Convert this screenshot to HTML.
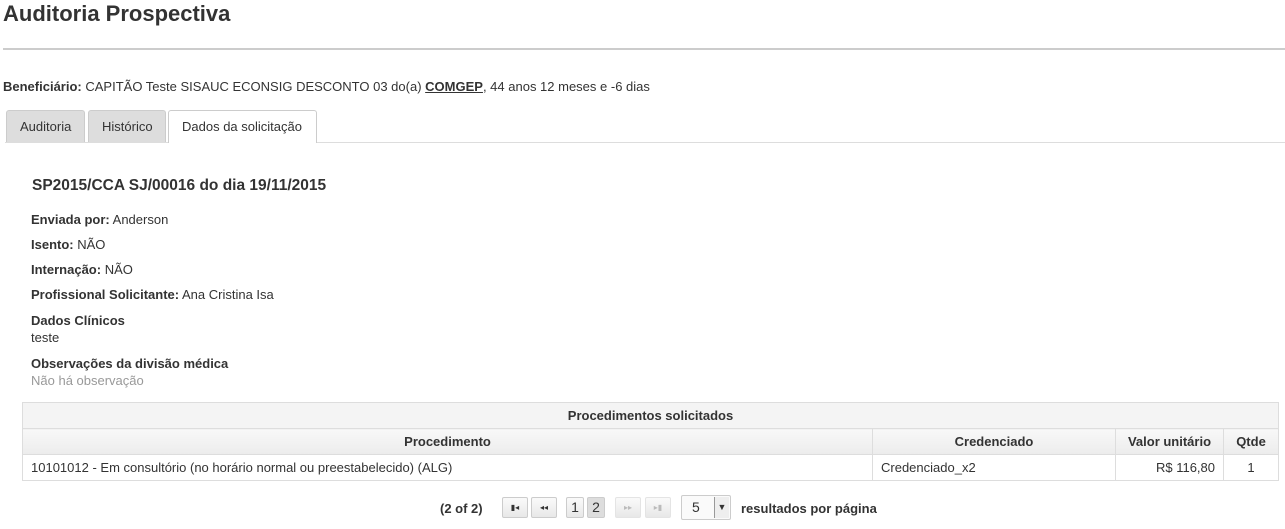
<!DOCTYPE html>
<html><head><meta charset="utf-8"><style>
body{margin:0;font-family:"Liberation Sans",Arial,sans-serif;font-size:13px;color:#333;background:#fff;width:1285px;height:529px;overflow:hidden;position:relative}
.a{position:absolute;white-space:nowrap}
h1{position:absolute;left:3px;top:1px;margin:0;font-size:22px;font-weight:bold;color:#333}
.hr{position:absolute;left:3px;top:48px;width:1282px;height:2px;background:#ccc}
.tab{position:absolute;top:110px;height:32px;line-height:32px;background:#ddd;border:1px solid #ccc;border-bottom:none;border-radius:3px 3px 0 0;padding:0 13px;font-size:13px;color:#333;box-sizing:border-box}
.tabs-line{position:absolute;left:5px;right:0;top:142px;height:1px;background:#ddd}
b{color:#333}
table{position:absolute;left:22px;top:402px;width:1257px;border-collapse:collapse;font-size:13px}
td,th{border:1px solid #ddd;height:25px;padding:0 8px}
th{background:linear-gradient(#f8f8f8,#ececec);font-weight:bold;color:#333}
.btn{position:absolute;top:497px;height:21px;border:1px solid #ccc;border-radius:2px;background:linear-gradient(#fafafa,#e8e8e8);box-sizing:border-box;font-size:14px;text-align:center;line-height:19px;color:#333}
</style></head><body>
<h1>Auditoria Prospectiva</h1>
<div class="hr"></div>
<div class="a" style="left:3px;top:79px"><b>Beneficiário:</b> CAPITÃO Teste SISAUC ECONSIG DESCONTO 03 do(a) <b style="text-decoration:underline">COMGEP</b>, 44 anos 12 meses e -6 dias</div>
<div class="tab" style="left:6px;width:79px">Auditoria</div>
<div class="tab" style="left:88px;width:78px">Histórico</div>
<div class="tabs-line"></div>
<div class="tab" style="left:168px;width:149px;background:#fff;height:33px">Dados da solicitação</div>
<div class="a" style="left:32px;top:177px;font-size:15.5px;font-weight:bold;color:#333">SP2015/CCA SJ/00016 do dia 19/11/2015</div>
<div class="a" style="left:31px;top:212px"><b>Enviada por:</b> Anderson</div>
<div class="a" style="left:31px;top:237px"><b>Isento:</b> NÃO</div>
<div class="a" style="left:31px;top:262px"><b>Internação:</b> NÃO</div>
<div class="a" style="left:31px;top:287px"><b>Profissional Solicitante:</b> Ana Cristina Isa</div>
<div class="a" style="left:31px;top:313px"><b>Dados Clínicos</b></div>
<div class="a" style="left:31px;top:330px">teste</div>
<div class="a" style="left:31px;top:356px"><b>Observações da divisão médica</b></div>
<div class="a" style="left:31px;top:373px;color:#999">Não há observação</div>
<table>
<tr><th colspan="4" style="background:#f4f4f4">Procedimentos solicitados</th></tr>
<tr><th style="width:833px">Procedimento</th><th style="width:226px">Credenciado</th><th style="width:91px">Valor unitário</th><th>Qtde</th></tr>
<tr><td>10101012 - Em consultório (no horário normal ou preestabelecido) (ALG)</td><td>Credenciado_x2</td><td style="text-align:right">R$ 116,80</td><td style="text-align:center">1</td></tr>
</table>
<div class="a" style="left:440px;top:501px;font-weight:bold">(2 of 2)</div>
<div class="btn" style="left:502px;width:26px;font-size:8px">▮◂</div>
<div class="btn" style="left:531px;width:26px;font-size:8px">◂◂</div>
<div class="btn" style="left:566px;width:18px">1</div>
<div class="btn" style="left:587px;width:18px;background:#ddd">2</div>
<div class="btn" style="left:615px;width:26px;font-size:8px;color:#bbb;border-color:#e4e4e4">▸▸</div>
<div class="btn" style="left:645px;width:26px;font-size:8px;color:#bbb;border-color:#e4e4e4">▸▮</div>
<div class="btn" style="left:681px;width:50px;height:25px;top:495px;background:#fafafa;text-align:left;padding-left:10px;line-height:23px">5<span style="position:absolute;right:1px;top:1px;width:14px;height:21px;border-left:1px solid #999;background:#eee;font-size:9px;line-height:21px;text-align:center">▼</span></div>
<div class="a" style="left:741px;top:501px;font-weight:bold;font-size:13px">resultados por página</div>
</body></html>
